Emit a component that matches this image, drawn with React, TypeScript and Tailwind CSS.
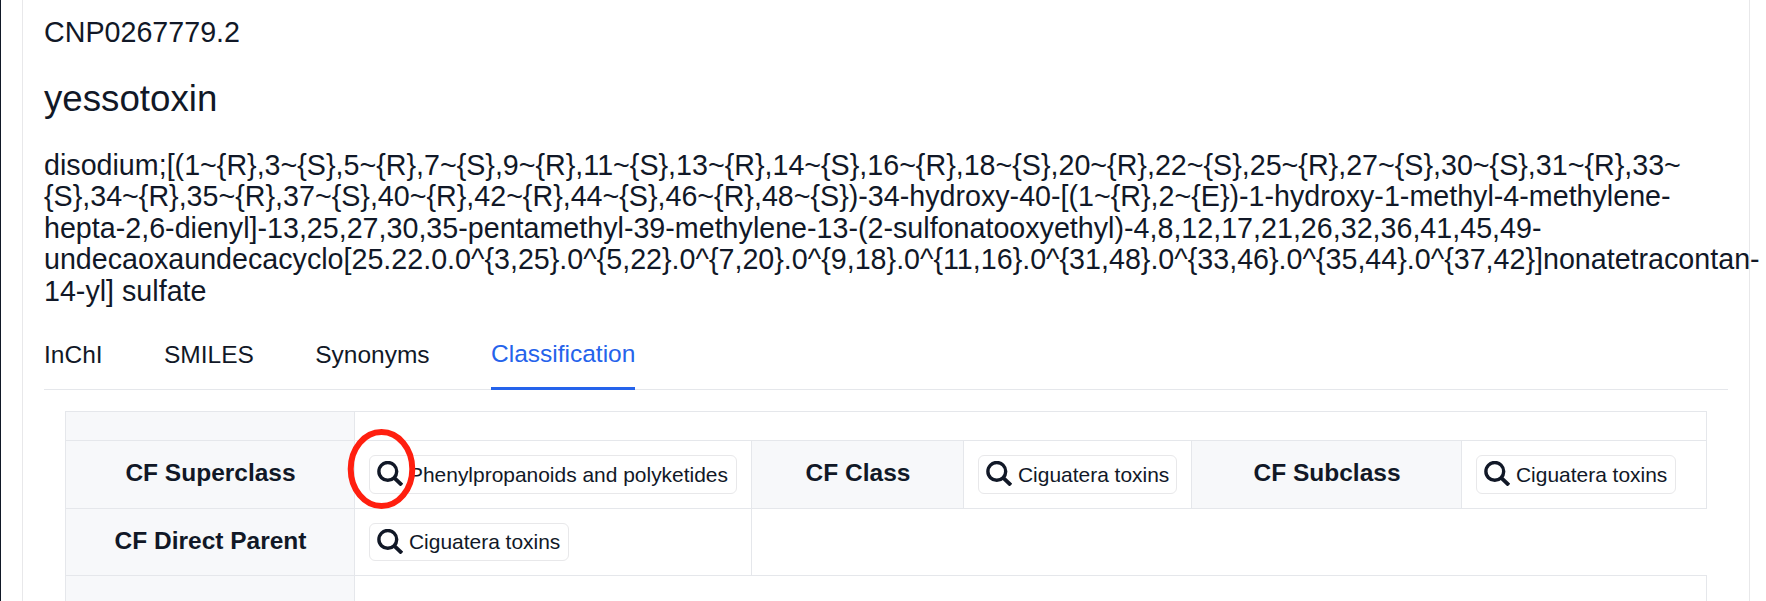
import React from "react";

function SearchIcon() {
  return (
    <svg className="h-[25px] w-[26px] shrink-0" viewBox="0 0 26 25" fill="none" stroke="#111827" strokeWidth="3.4">
      <circle cx="10.8" cy="10.4" r="8.9" />
      <path d="M17 16.6 L24.9 24.1" strokeWidth="3.9" />
    </svg>
  );
}

function Tag({ label, className, textClassName = "pt-[4px]" }: { label: string; className: string; textClassName?: string }) {
  return (
    <div className={`flex items-start rounded-md border border-[#e8e8ea] pl-[7px] ${className}`}>
      <div className="pt-[5px]">
        <SearchIcon />
      </div>
      <span className={`ml-[6px] text-[20.95px] leading-[30px] whitespace-nowrap ${textClassName}`}>{label}</span>
    </div>
  );
}

function HeadCell({ label, className }: { label?: string; className: string }) {
  return (
    <div className={`flex justify-center border-r border-b border-[#e5e7eb] bg-[#f7f8fa] pl-px text-[24.5px] leading-[34px] font-bold whitespace-nowrap ${className}`}>
      {label}
    </div>
  );
}

const nameLines = [
  "disodium;[(1~{R},3~{S},5~{R},7~{S},9~{R},11~{S},13~{R},14~{S},16~{R},18~{S},20~{R},22~{S},25~{R},27~{S},30~{S},31~{R},33~",
  "{S},34~{R},35~{R},37~{S},40~{R},42~{R},44~{S},46~{R},48~{S})-34-hydroxy-40-[(1~{R},2~{E})-1-hydroxy-1-methyl-4-methylene-",
  "hepta-2,6-dienyl]-13,25,27,30,35-pentamethyl-39-methylene-13-(2-sulfonatooxyethyl)-4,8,12,17,21,26,32,36,41,45,49-",
  "undecaoxaundecacyclo[25.22.0.0^{3,25}.0^{5,22}.0^{7,20}.0^{9,18}.0^{11,16}.0^{31,48}.0^{33,46}.0^{35,44}.0^{37,42}]nonatetracontan-",
  "14-yl] sulfate",
];

export default function App() {
  return (
    <div className="h-[601px] w-[1766px] overflow-hidden border-l border-[#111827] bg-white pl-[21px] font-['Liberation_Sans',Arial,sans-serif] text-[#111827]">
      <main className="h-full w-[1728px] border-x border-[#e8e8ea] pl-[21px]">
        <div className="h-[73px] pt-[12px] text-[28.67px] leading-[40px]">CNP0267779.2</div>
        <h1 className="h-[76px] pt-[2px] text-[36.7px] leading-[48px]">yessotoxin</h1>
        <div className="h-[178px] pt-[0.7px] text-[28.67px] leading-[31.6px] whitespace-nowrap">
          {nameLines.map((line) => (
            <div key={line}>{line}</div>
          ))}
        </div>
        <nav className="flex h-[63px] w-[1684px] gap-[61.4px] border-b border-[#e5e7eb] text-[24.5px] leading-[54px]">
          <span className="pt-px">InChI</span>
          <span className="pt-px">SMILES</span>
          <span className="pt-px">Synonyms</span>
          <span className="h-[63px] border-b-3 border-[#2563eb] text-[#2563eb]">Classification</span>
        </nav>
        <section className="mt-[21px] ml-[21px] w-[1642px] border-l border-[#e5e7eb]">
          <div className="flex h-[30px] border-t border-[#e5e7eb]">
            <HeadCell className="w-[289px]" />
            <div className="grow border-r border-b border-[#e5e7eb]" />
          </div>
          <div className="flex h-[68px]">
            <HeadCell label="CF Superclass" className="w-[289px] pt-[15px]" />
            <div className="w-[397px] border-r border-b border-[#e5e7eb] pt-[14px] pl-[14px]">
              <div className="relative">
                <Tag label="Phenylpropanoids and polyketides" className="h-[39px] w-[368px]" />
                <svg className="absolute -top-[28px] -left-[23px] h-[82px] w-[70px]" viewBox="0 0 70 82" fill="none">
                  <ellipse cx="35.5" cy="42" rx="30.8" ry="37" stroke="#ff1f0f" strokeWidth="6" />
                </svg>
              </div>
            </div>
            <HeadCell label="CF Class" className="w-[212px] pt-[15px]" />
            <div className="w-[228px] border-r border-b border-[#e5e7eb] pt-[14px] pl-[14px]">
              <Tag label="Ciguatera toxins" className="h-[39px] w-[199px]" />
            </div>
            <HeadCell label="CF Subclass" className="w-[270px] pt-[15px]" />
            <div className="w-[245px] border-r border-b border-[#e5e7eb] pt-[14px] pl-[14px]">
              <Tag label="Ciguatera toxins" className="h-[39px] w-[200px]" />
            </div>
          </div>
          <div className="flex h-[67px]">
            <HeadCell label="CF Direct Parent" className="w-[289px] pt-[15px]" />
            <div className="w-[397px] border-r border-b border-[#e5e7eb] pt-[14px] pl-[14px]">
              <Tag label="Ciguatera toxins" className="h-[38px] w-[200px]" textClassName="pt-[3px]" />
            </div>
            <div className="grow border-b border-[#e5e7eb]" />
          </div>
          <div className="flex h-[40px]">
            <HeadCell className="w-[289px]" />
            <div className="grow border-r border-[#e5e7eb]" />
          </div>
        </section>
      </main>
    </div>
  );
}
